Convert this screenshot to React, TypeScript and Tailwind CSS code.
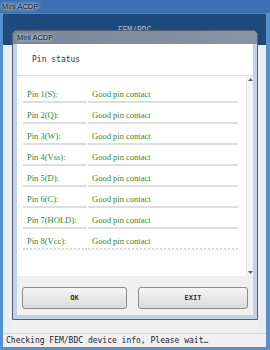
const pins = [
  "Pin 1(S):",
  "Pin 2(Q):",
  "Pin 3(W):",
  "Pin 4(Vss):",
  "Pin 5(D):",
  "Pin 6(C):",
  "Pin 7(HOLD):",
  "Pin 8(Vcc):",
];

const mono = "font-['DejaVu_Sans_Mono',monospace]";
const serif = "font-['Liberation_Serif',serif]";

function Arrow({ up }: { up?: boolean }) {
  return (
    <svg width="5" height="3" viewBox="0 0 5 3">
      <path d={up ? "M0 3L2.5 0L5 3Z" : "M0 0L2.5 3L5 0Z"} fill="#5a5a5a" />
    </svg>
  );
}

function PinRow({ label, last }: { label: string; last: boolean }) {
  const line = last
    ? "border-b-2 border-dotted border-[#d6d6d6]"
    : "border-b-2 border-[#dedede]";
  return (
    <>
      <div className={`h-[21px] pl-[4px] pt-[7px] leading-[10px] ${line}`}>{label}</div>
      <div className={`h-[21px] pl-[4px] pt-[7px] leading-[10px] ${line}`}>Good pin contact</div>
    </>
  );
}

export default function App() {
  return (
    <div className="relative flex h-[350px] w-[270px] flex-col overflow-hidden bg-[#5690cf]">
      {/* main window title */}
      <div className="flex h-[13px] items-center bg-[#3a71b4] pl-[2px] font-['Liberation_Sans',sans-serif] text-[7.5px] text-[#111] [text-shadow:0_0_3px_#fff,0_0_5px_#fff]">
        Mini ACDP
      </div>

      <div className="ml-[3px] mr-[4px] flex flex-1 flex-col">
        <div className="flex h-[32px] justify-center border-t border-[#4d7fb8] bg-[#1f4b7c] pt-[11px]">
          <span className={`${mono} text-[8px] text-[#aebccb]`}>FEM/BDC</span>
        </div>
        <div className="flex-1 border-l-[9px] border-r-[8px] border-[#eaeef2] bg-[#f0f0f0]" />
        <div
          className={`flex h-[14px] items-center border-t border-[#d4d4d4] bg-[#f0f0f0] pl-[3px] ${mono} text-[8px] text-[#222]`}
        >
          Checking FEM/BDC device info, Please wait…
        </div>
      </div>
      <div className="h-[3px]" />

      {/* dialog window */}
      <div className="absolute left-[12px] top-[30px] flex h-[290px] w-[246px] flex-col rounded-t-[5px] border border-[#55606d] bg-[#c2d2e4]">
        <div className="flex h-[13px] items-center rounded-t-[4px] bg-gradient-to-r from-[#7a8698] to-[#8893a3] pl-[4px] font-['Liberation_Sans',sans-serif] text-[7.5px] text-[#111] [text-shadow:0_0_3px_#dfe6ee,0_0_5px_#dfe6ee]">
          Mini ACDP
        </div>
        <div className="flex flex-1 flex-col px-[4px] pb-[4px]">
          <div className="flex flex-1 flex-col bg-[#f0f0f0]">
            <div className="flex h-[232px] flex-col bg-white">
              <div className={`flex h-[32px] items-center border-b border-[#d9d9d9] pl-[15px] ${mono} text-[8px] text-[#333]`}>
                Pin status
              </div>
              <div className="flex flex-1">
                <div className="flex-1 pl-[6px] pt-[6px]">
                  <div
                    className={`grid grid-cols-[64px_150px] gap-x-[1px] ${serif} text-[8.5px] text-[#2f8a34]`}
                  >
                    {pins.map((p, i) => (
                      <PinRow key={p} label={p} last={i === pins.length - 1} />
                    ))}
                  </div>
                </div>
                <div className="flex w-[7px] flex-col items-center justify-between border-l border-[#e6e6e6] bg-[#f4f4f4] py-[2px]">
                  <Arrow up />
                  <Arrow />
                </div>
              </div>
            </div>
            <div className={`flex gap-[11px] pl-[5px] pt-[11px] ${mono} text-[7px] font-semibold text-[#333]`}>
              <button className="flex h-[22px] w-[105px] items-center justify-center rounded-[3px] border border-[#8a8a8a] bg-gradient-to-b from-[#f6f6f6] to-[#dadada]">
                OK
              </button>
              <button className="flex h-[22px] w-[110px] items-center justify-center rounded-[3px] border border-[#8a8a8a] bg-gradient-to-b from-[#f6f6f6] to-[#dadada]">
                EXIT
              </button>
            </div>
          </div>
        </div>
      </div>
    </div>
  );
}
